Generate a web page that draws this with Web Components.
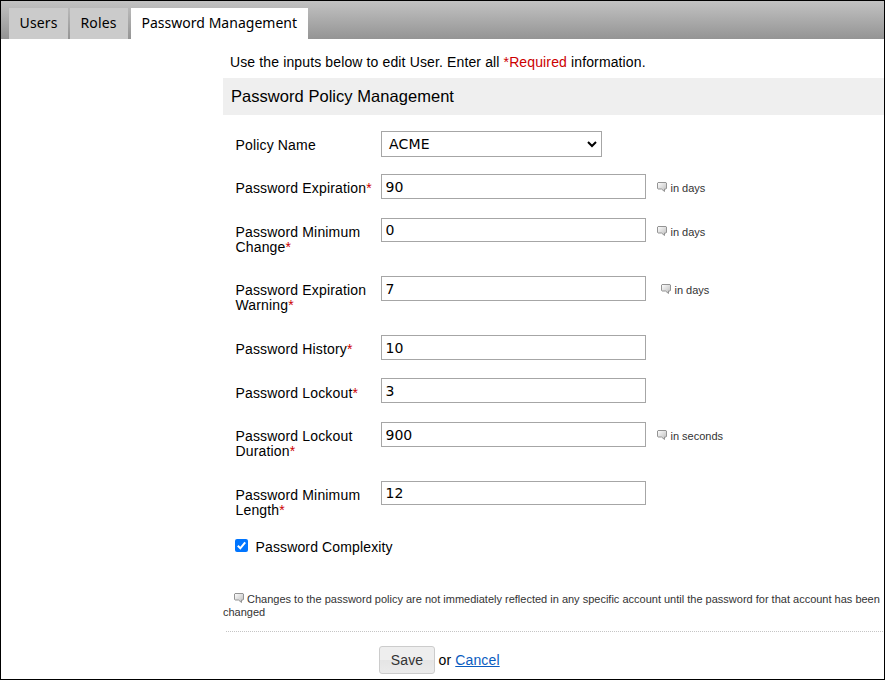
<!DOCTYPE html>
<html lang="en"><head><meta charset="utf-8"><title>Password Management</title>
<style>html,body{margin:0;padding:0}body{width:885px;height:680px;overflow:hidden;background:#fff}</style></head>
<body><password-page></password-page>
<script>
const define=(name,html,setup)=>customElements.define(name,class extends HTMLElement{
  connectedCallback(){
    if(this.shadowRoot)return;
    const t=document.createElement('template');
    t.innerHTML=html;
    const r=this.attachShadow({mode:'open'});
    r.append(t.content.cloneNode(true));
    if(setup)setup(this,r);
  }
});

define('tab-item',`<style>
:host{display:block;box-sizing:border-box;height:31px;background:#cbcbcb;padding:0 0 0 10.500px;font:14px/30px "Noto Sans",sans-serif;letter-spacing:.15px;color:#000;white-space:nowrap}
:host([active]){background:#fff;letter-spacing:.02px}
</style><slot></slot>`);

define('tab-bar',`<style>
:host{display:flex;box-sizing:border-box;height:38px;padding:7px 0 0 8px;background:linear-gradient(#c2c2c2,#949494)}
</style><slot></slot>`);

define('bubble-icon',`<style>:host{display:inline-block;width:10px;height:10px}svg{display:block}</style>
<svg width="10" height="10" viewBox="0 0 10 10"><defs><linearGradient id="g" x2="1" y2="1"><stop stop-color="#fff"/><stop offset="1" stop-color="#bbb"/></linearGradient></defs>
<path d="M1 .5h8l.5.5v5.500l-.5.5h-1.500v2.500L4.500 7H1L.5 6.500V1z" fill="url(#g)" stroke="#949494" stroke-width="1"/></svg>`);

define('hint-note',`<style>
:host{display:flex;align-items:flex-start;font:11px/13px "Liberation Sans",Arial,sans-serif;color:#333;padding:8px 0 0 11px}
bubble-icon{margin-right:3.500px}
</style><bubble-icon></bubble-icon><span><slot></slot></span>`);

define('form-row',`<style>
:host{display:grid;grid-template-columns:145px auto 1fr;align-items:start;height:var(--h)}
.label{margin-left:-.5px;padding-top:var(--lt,7px);font:14px/15px "Liberation Sans",Arial,sans-serif;letter-spacing:.16px}
b{font-weight:400;color:#c00}
b[hidden]{display:none}
</style><div class="label"><slot name="label"></slot><b>*</b></div><slot></slot><slot name="hint"></slot>`,
(h,r)=>{r.querySelector('b').hidden=h.hasAttribute('optional')});

define('text-box',`<style>
:host{display:block;height:var(--bh,25px)}
input{display:block;box-sizing:border-box;width:265px;height:100%;margin:0;border:1px solid #a6a6a6;border-radius:0;background:#fff;padding:0 3.500px;font:14px "DejaVu Sans",Verdana,sans-serif;color:#000;outline:0}
</style><input type="text">`,(h,r)=>{r.querySelector('input').value=h.getAttribute('value')});

define('policy-select',`<style>
:host{display:flex;box-sizing:border-box;width:221px;height:26px;border:1px solid #a6a6a6;padding:0 4px 0 7px;align-items:center;justify-content:space-between;font:14px/24px "DejaVu Sans",Verdana,sans-serif;letter-spacing:.2px;background:#fff}
svg{display:block}
</style><slot></slot><svg width="10" height="8" viewBox="0 0 10 8"><path d="M1 2l4 4 4-4" fill="none" stroke="#000" stroke-width="2"/></svg>`);

define('check-box',`<style>
:host{display:flex;align-items:center;margin-left:-1px;font:14px/16px "Liberation Sans",Arial,sans-serif;letter-spacing:.14px}
svg{display:block;margin:-3px 7.500px 0 0}
</style><svg width="13" height="13" viewBox="0 0 13 13"><rect width="13" height="13" rx="2" fill="#0075ff"/><path d="M2.800 6.800l2.500 2.500 4.900-6" fill="none" stroke="#fff" stroke-width="2"/></svg><slot></slot>`);

define('save-button',`<style>
:host{display:block;box-sizing:border-box;width:56px;height:28px;border:1px solid #ccc;border-radius:3px;background:linear-gradient(#eee 50%,#e5e5e5 51%,#ebebeb);text-align:center;font:14px/26px "Liberation Sans",Arial,sans-serif;color:#333;letter-spacing:.14px}
</style><slot></slot>`);

define('password-page',`<style>
:host{display:block;box-sizing:border-box;width:885px;height:680px;border:1px solid #000;background:#fff;color:#000;font:14px/16px "Liberation Sans",Arial,sans-serif}
tab-item:nth-child(1){width:59px;margin-right:2px}
tab-item:nth-child(2){width:58px;margin-right:3px}
tab-item:nth-child(3){width:177px}
main{display:block;margin-left:222px}
.intro{padding:15px 0 0 7px;height:24px;letter-spacing:.13px;white-space:nowrap}
.red{color:#c00}
h2{box-sizing:border-box;margin:0;height:37px;background:#efefef;padding:0 0 0 8px;font:16.500px/36px "Liberation Sans",Arial,sans-serif;letter-spacing:.04px}
form{padding:16px 0 0 13px}
.note{height:27px;margin:38px 0 0;font:11px/13px "Liberation Sans",Arial,sans-serif;color:#333;white-space:nowrap}
.note bubble-icon{margin:0 3px 0 11px}
.rule{height:1px;margin:11px 0 0 3px;background:repeating-linear-gradient(90deg,#c5c5c5 0 1px,#fff 1px 2px)}
.actions{display:flex;align-items:center;gap:3.500px;padding:14px 0 0 156px;letter-spacing:.14px}
a{color:#0a5cc0}
</style>
<tab-bar><tab-item>Users</tab-item><tab-item>Roles</tab-item><tab-item active>Password Management</tab-item></tab-bar>
<main>
<div class="intro">Use the inputs below to edit User. Enter all <span class="red">*Required</span> information.</div>
<h2>Password Policy Management</h2>
<form>
<form-row optional style="--h:43px"><span slot="label">Policy Name</span><policy-select>ACME</policy-select></form-row>
<form-row style="--h:44px"><span slot="label">Password Expiration</span><text-box value="90"></text-box><hint-note slot="hint">in days</hint-note></form-row>
<form-row style="--h:58px"><span slot="label">Password Minimum<br>Change</span><text-box value="0" style="--bh:24px"></text-box><hint-note slot="hint">in days</hint-note></form-row>
<form-row style="--h:59px"><span slot="label">Password Expiration<br>Warning</span><text-box value="7"></text-box><hint-note slot="hint" style="margin-left:4px">in days</hint-note></form-row>
<form-row style="--h:43px"><span slot="label">Password History</span><text-box value="10"></text-box></form-row>
<form-row style="--h:44px;--lt:8px"><span slot="label">Password Lockout</span><text-box value="3"></text-box></form-row>
<form-row style="--h:59px"><span slot="label">Password Lockout<br>Duration</span><text-box value="900"></text-box><hint-note slot="hint">in seconds</hint-note></form-row>
<form-row style="--h:58px"><span slot="label">Password Minimum<br>Length</span><text-box value="12" style="--bh:24px"></text-box></form-row>
<check-box>Password Complexity</check-box>
</form>
<div class="note"><bubble-icon></bubble-icon><span>Changes to the password policy are not immediately reflected in any specific account until the password for that account has been</span><br>changed</div>
<div class="rule"></div>
<div class="actions"><save-button>Save</save-button><span>or <a href="#">Cancel</a></span></div>
</main>`);
</script></body></html>
